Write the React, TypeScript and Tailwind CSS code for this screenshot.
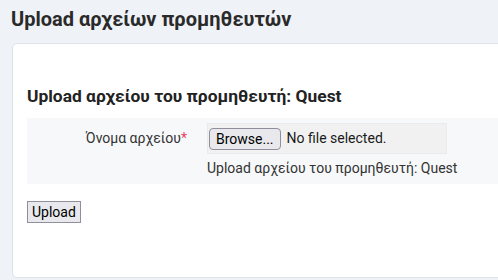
import React from 'react';

const font = { fontFamily: 'Roboto, "Noto Sans", sans-serif' };

export default function App() {
  return (
    <div className="w-[498px] h-[280px] overflow-hidden bg-[#eff3f8]" style={font}>
      {/* Page title */}
      <div className="pl-[11px] pt-[6px] h-[43px]">
        <h1 className="text-[20px] leading-[27px] font-bold text-[#2a2a2a]">Upload αρχείων προμηθευτών</h1>
      </div>

      {/* Card */}
      <div className="ml-[12px] w-[520px] h-[235px] bg-white border border-[#dde3ec] rounded-[5px] pl-[14px] pt-[41px]">
        <h2 className="text-[17.4px] leading-[23px] font-bold text-[#222]">Upload αρχείου του προμηθευτή: Quest</h2>

        <div className="mt-[10px] bg-[#f7f8fa] flex py-[5px] h-[66px]">
          <div className="w-[180px] shrink-0 pr-[20px] text-right text-[14px] leading-[31px] text-[#333]">
            Όνομα αρχείου<span className="text-[#e8455c]">*</span>
          </div>
          <div className="flex flex-col">
            <div className="w-[240px] h-[31px] bg-[#f1f1f1] border border-[#ebebeb] flex items-center pl-[1px]">
              <button className="h-[22px] px-[6px] rounded-[4px] border border-[#8f8f9d] bg-[#e9e9ed] text-[14px] leading-[20px] text-black">
                Browse...
              </button>
              <span className="ml-[6px] text-[14px] text-[#1a1a1a]">No file selected.</span>
            </div>
            <div className="mt-[5px] text-[14px] leading-[18px] text-[#333]">
              Upload αρχείου του προμηθευτή: Quest
            </div>
          </div>
        </div>

        <button className="mt-[17px] h-[22px] px-[4px] border border-[#8f8f9d] bg-[#e9e9ed] text-[14px] leading-[20px] text-black">
          Upload
        </button>
      </div>
    </div>
  );
}
